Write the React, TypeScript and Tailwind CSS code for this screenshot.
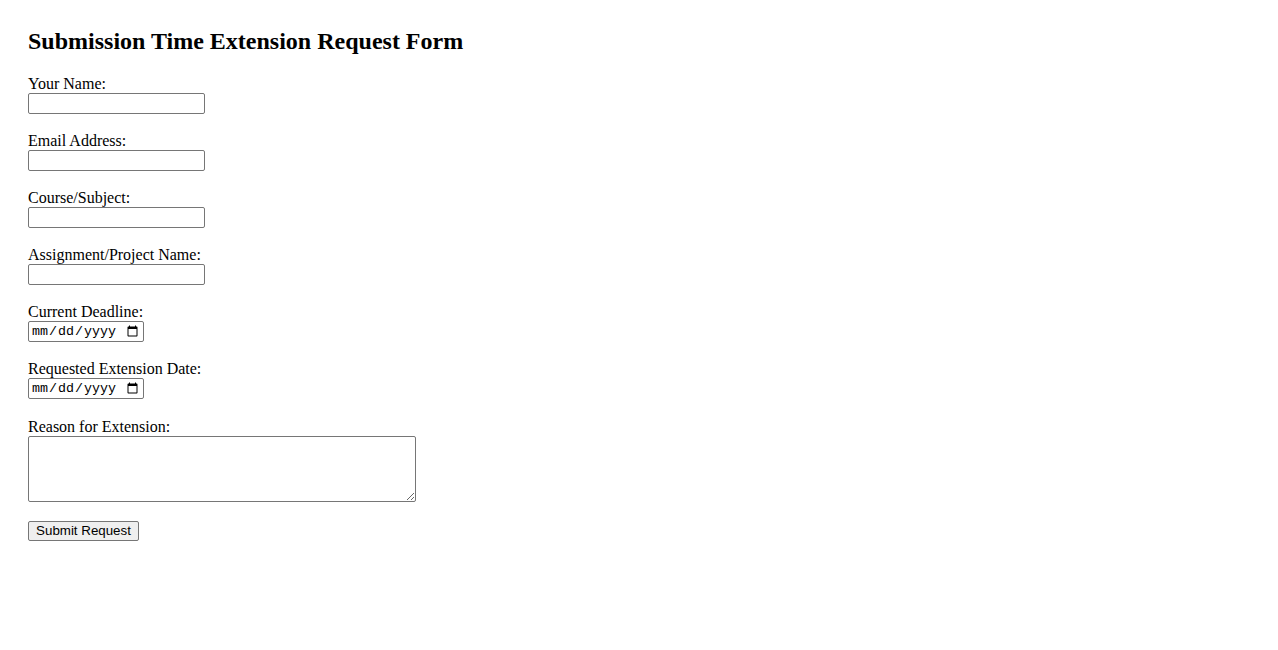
import React from "react";

const inputCls =
  "block w-[177px] h-[21px] border border-[#767676] rounded-[2px] px-[2px] py-[1px] bg-white text-[13.33px] font-['Liberation_Sans',Arial,sans-serif] outline-none";
const dateCls =
  "block w-[116px] h-[21px] border border-[#767676] rounded-[2px] px-[2px] py-[1px] bg-white text-[13.33px] font-['Liberation_Mono',monospace] text-black outline-none";

function Field({ label, children, extra = "" }: { label: string; children: React.ReactNode; extra?: string }) {
  return (
    <div className={"flex flex-col items-start mb-[18px] " + extra}>
      <label className="block leading-[18px]">{label}</label>
      {children}
    </div>
  );
}

export default function App() {
  return (
    <div className="min-h-[650px] bg-white pt-[27px] pl-[28px] font-['Liberation_Serif','Times_New_Roman',serif] text-[16px] text-black">
      <h2 className="text-[24px] font-bold leading-[28px] mb-[20px]">
        Submission Time Extension Request Form
      </h2>
      <form className="flex flex-col items-start" onSubmit={(e) => e.preventDefault()}>
        <Field label="Your Name:">
          <input type="text" className={inputCls} />
        </Field>
        <Field label="Email Address:">
          <input type="email" className={inputCls} />
        </Field>
        <Field label="Course/Subject:">
          <input type="text" className={inputCls} />
        </Field>
        <Field label="Assignment/Project Name:">
          <input type="text" className={inputCls} />
        </Field>
        <Field label="Current Deadline:">
          <input type="date" className={dateCls} />
        </Field>
        <Field label="Requested Extension Date:">
          <input type="date" className={dateCls} />
        </Field>
        <Field label="Reason for Extension:" extra="mt-[1px] mb-[19px]">
          <textarea className="block w-[388px] h-[66px] border border-[#767676] rounded-[2px] p-[2px] bg-white text-[13.33px] font-['Liberation_Mono',monospace] outline-none" />
        </Field>
        <button
          type="submit"
          className="w-[111px] h-[20px] border border-[#767676] rounded-[2px] bg-[#efefef] text-[13.33px] leading-[16px] font-['Liberation_Sans',Arial,sans-serif] text-black px-[6px]"
        >
          Submit Request
        </button>
      </form>
    </div>
  );
}
